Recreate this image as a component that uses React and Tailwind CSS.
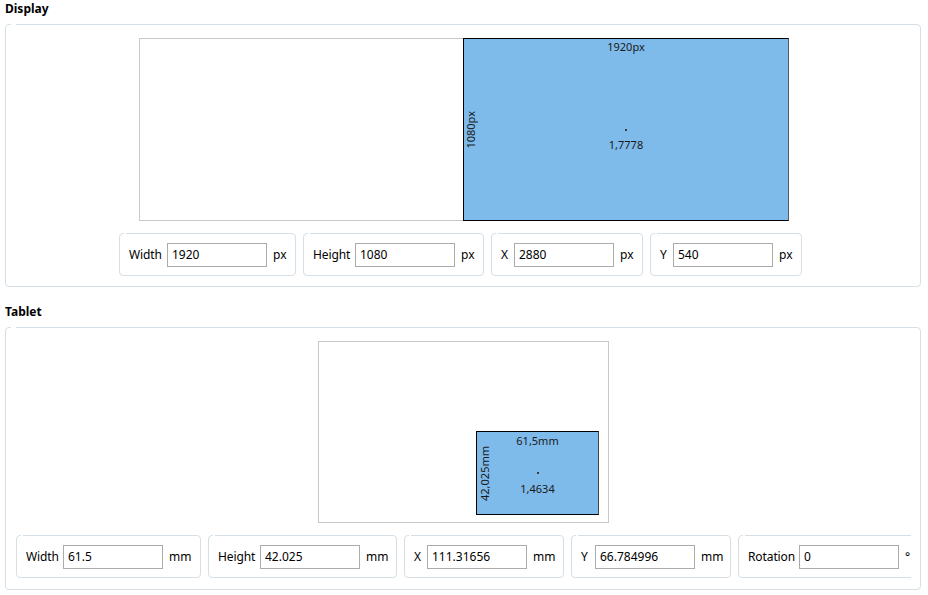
import React from "react";

function Field({ label, value, unit, w, lw }) {
  return (
    <div className={`relative flex shrink-0 items-center h-[43px] border border-[#d5dfe5] rounded-[4px] pl-[9px] ${w}`}>
      <span className="absolute -top-px left-[4px] w-[2px] h-px bg-white" />
      <span className={`leading-[16px] whitespace-nowrap shrink-0 tracking-[-0.1px] ${lw}`}>{label}</span>
      <input
        readOnly
        value={value}
        className="ml-[6px] w-[100px] h-[24px] shrink-0 border border-[#ababab] px-[4px] text-[12px] leading-[16px] text-black outline-none bg-white"
      />
      <span className="ml-[6px] leading-[16px] whitespace-nowrap">{unit}</span>
    </div>
  );
}

function Group({ title, children }) {
  return (
    <div>
      <div className="h-[24px] pt-[1px] font-bold leading-[16px]">{title}</div>
      <div className="relative w-[916px] h-[263px] border border-[#d5dfe5] rounded-[4px]">
        <span className="absolute -top-px left-[5px] w-[5px] h-px bg-white" />
        {children}
      </div>
    </div>
  );
}

function Dot() {
  return <div className="absolute left-1/2 top-[calc(50%-1px)] w-[2px] h-[2px] -translate-x-1/2 bg-[#3a3a3a]" />;
}

export default function App() {
  return (
    <div className="w-[928px] h-[595px] overflow-hidden bg-white text-[12px] text-black font-['Noto_Sans',_'Open_Sans',_sans-serif]">
      <div className="pl-[5px]">
        <Group title="Display">
          <div className="pt-[13px] pl-[2px] flex justify-center">
            <div className="relative w-[650px] h-[183px] border border-[#c8c8c8] bg-white">
              <div className="absolute top-[-1px] left-[323px] w-[326px] h-[183px] border border-black border-r-[#5a5a5a] bg-[#7ebaea] text-[11px] leading-[13px] text-[#1a1a1a]">
                <div className="absolute top-[1px] left-0 right-0 text-center">1920px</div>
                <div className="absolute left-0 top-0 bottom-0 flex items-center">
                  <span className="[writing-mode:vertical-rl] rotate-180">1080px</span>
                </div>
                <Dot />
                <div className="absolute top-[calc(50%+8px)] left-0 right-0 text-center">1,7778</div>
              </div>
            </div>
          </div>
          <div className="mt-[12px] ml-[113px] flex gap-[7px]">
            <Field label="Width" value="1920" unit="px" w="w-[177px]" lw="w-[32px]" />
            <Field label="Height" value="1080" unit="px" w="w-[181px]" lw="w-[36px]" />
            <Field label="X" value="2880" unit="px" w="w-[152px]" lw="w-[7px]" />
            <Field label="Y" value="540" unit="px" w="w-[152px]" lw="w-[7px]" />
          </div>
        </Group>

        <div className="mt-[16px]">
          <Group title="Tablet">
            <div className="pt-[13px] pl-[1px] flex justify-center">
              <div className="relative w-[291px] h-[182px] border border-[#c8c8c8] bg-white">
                <div className="absolute top-[89px] left-[157px] w-[123px] h-[84px] border border-black border-r-[#444] bg-[#7ebaea] text-[11px] leading-[13px] text-[#1a1a1a]">
                  <div className="absolute top-[2px] left-0 right-0 text-center">61,5mm</div>
                  <div className="absolute left-[1px] top-0 bottom-0 flex items-center">
                    <span className="[writing-mode:vertical-rl] rotate-180">42,025mm</span>
                  </div>
                  <Dot />
                  <div className="absolute top-[calc(50%+9px)] left-0 right-0 text-center">1,4634</div>
                </div>
              </div>
            </div>
            <div className="mt-[12px] ml-[10px] w-[895px] overflow-hidden">
              <div className="flex gap-[7px] w-max">
                <Field label="Width" value="61.5" unit="mm" w="w-[185px]" lw="w-[31px]" />
                <Field label="Height" value="42.025" unit="mm" w="w-[189px]" lw="w-[36px]" />
                <Field label="X" value="111.31656" unit="mm" w="w-[160px]" lw="w-[7px]" />
                <Field label="Y" value="66.784996" unit="mm" w="w-[160px]" lw="w-[8px]" />
                <Field label="Rotation" value="0" unit="°" w="w-[200px]" lw="w-[45px]" />
              </div>
            </div>
          </Group>
        </div>
      </div>
    </div>
  );
}
